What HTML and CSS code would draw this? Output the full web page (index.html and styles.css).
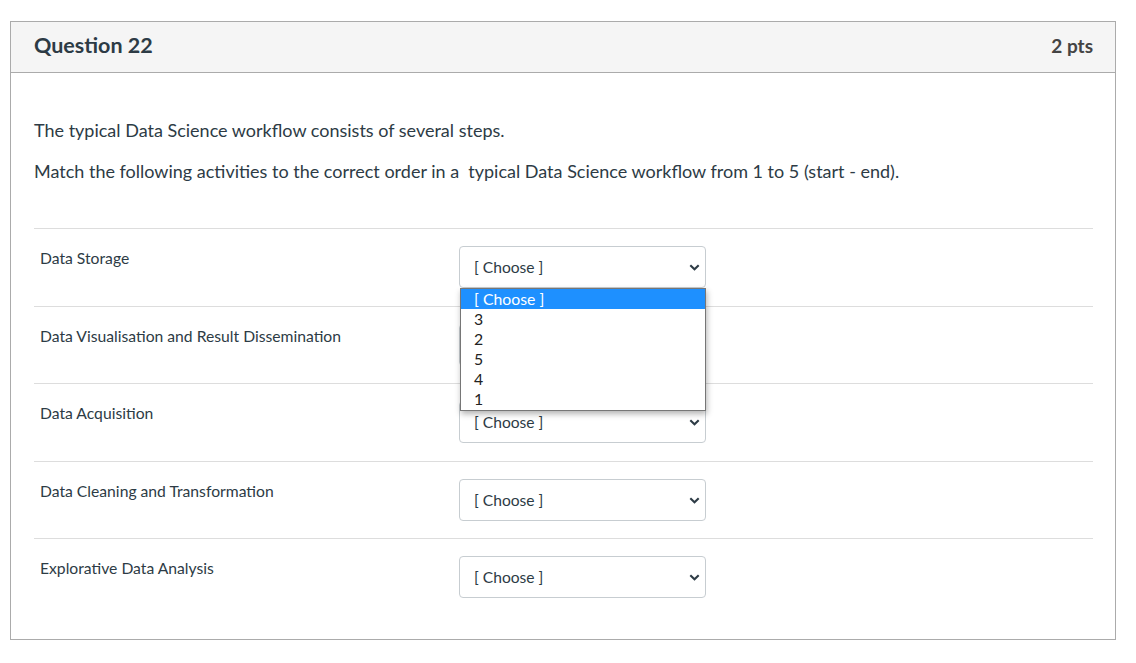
FILE: index.html
```html
<!DOCTYPE html>
<html>
<head>
<meta charset="utf-8">
<link rel="stylesheet" href="styles.css">
</head>
<body>
<div class="question">
  <div class="header">
    <span class="title">Question 22</span>
    <span class="points">2 pts</span>
  </div>
  <div class="content">
    <div class="text">
      <p>The typical Data Science workflow consists of several steps.</p>
      <p>Match the following activities to the correct order in a&nbsp; typical Data Science workflow from 1 to 5 (start - end).</p>
    </div>
    <div class="answers">
      <div class="row">
        <div class="label">Data Storage</div>
        <div class="select open">
          <span class="value">[ Choose ]</span>
          <svg class="chev" width="11" height="7" viewBox="0 0 11 7"><path d="M1.3 1.2 5.5 5.2 9.7 1.2" fill="none" stroke="#2d3b45" stroke-width="2.1"/></svg>
          <div class="list">
            <div class="opt sel">[ Choose ]</div>
            <div class="opt">3</div>
            <div class="opt">2</div>
            <div class="opt">5</div>
            <div class="opt">4</div>
            <div class="opt">1</div>
          </div>
        </div>
      </div>
      <div class="row">
        <div class="label">Data Visualisation and Result Dissemination</div>
        <div class="select">
          <span class="value">[ Choose ]</span>
          <svg class="chev" width="11" height="7" viewBox="0 0 11 7"><path d="M1.3 1.2 5.5 5.2 9.7 1.2" fill="none" stroke="#2d3b45" stroke-width="2.1"/></svg>
        </div>
      </div>
      <div class="row">
        <div class="label">Data Acquisition</div>
        <div class="select">
          <span class="value">[ Choose ]</span>
          <svg class="chev" width="11" height="7" viewBox="0 0 11 7"><path d="M1.3 1.2 5.5 5.2 9.7 1.2" fill="none" stroke="#2d3b45" stroke-width="2.1"/></svg>
        </div>
      </div>
      <div class="row">
        <div class="label">Data Cleaning and Transformation</div>
        <div class="select">
          <span class="value">[ Choose ]</span>
          <svg class="chev" width="11" height="7" viewBox="0 0 11 7"><path d="M1.3 1.2 5.5 5.2 9.7 1.2" fill="none" stroke="#2d3b45" stroke-width="2.1"/></svg>
        </div>
      </div>
      <div class="row">
        <div class="label">Explorative Data Analysis</div>
        <div class="select">
          <span class="value">[ Choose ]</span>
          <svg class="chev" width="11" height="7" viewBox="0 0 11 7"><path d="M1.3 1.2 5.5 5.2 9.7 1.2" fill="none" stroke="#2d3b45" stroke-width="2.1"/></svg>
        </div>
      </div>
    </div>
  </div>
</div>
</body>
</html>
```
FILE: styles.css
```css
html, body {
  margin: 0;
  padding: 0;
  background: #ffffff;
}
body {
  font-family: Lato, "Open Sans", "Liberation Sans", sans-serif;
  color: #2d3b45;
  padding: 21px 0 0 10px;
}
.question {
  width: 1104px;
  height: 617px;
  border: 1px solid #ababab;
  display: flex;
  flex-direction: column;
}
.header {
  height: 50px;
  background: #f5f5f5;
  border-bottom: 1px solid #ababab;
  display: flex;
  align-items: center;
  justify-content: space-between;
  padding: 0 22px 0 23px;
}
.title {
  font-size: 21.5px;
  font-weight: 700;
  color: #2d3b45;
  margin-top: -4px;
}
.points {
  font-size: 19px;
  font-weight: 700;
  color: #444;
  margin-top: -4px;
}
.content {
  padding: 45px 22px 0 23px;
}
.text p {
  margin: 0 0 17px;
  font-size: 18px;
  line-height: 24px;
}
.answers {
  margin-top: 45px;
}
.row {
  display: flex;
  align-items: flex-start;
  border-top: 1px solid #dddddd;
  padding: 17px 0 17.5px;
}
.label {
  width: 419px;
  padding: 1px 0 0 6px;
  font-size: 15.7px;
  line-height: 22px;
}
.select {
  position: relative;
  height: 40px;
  border: 1px solid #c7cdd1;
  border-radius: 4px;
  display: flex;
  align-items: center;
  justify-content: space-between;
  padding: 0 5px 0 14px;
  box-sizing: content-box;
  width: 226px;
  background: #fff;
}
.value {
  font-size: 15.6px;
  color: #2d3b45;
}
.chev {
  display: block;
  margin-top: 1px;
}
.list {
  position: absolute;
  top: 41px;
  left: 0;
  width: 244px;
  padding-bottom: 1px;
  border: 1px solid #767676;
  background: #fff;
  box-shadow: 1px 3px 6px rgba(0,0,0,0.3);
  z-index: 5;
}
.opt {
  height: 20px;
  line-height: 20px;
  padding-left: 13px;
  font-size: 15.8px;
  color: #222;
}
.opt.sel {
  background: #1e90ff;
  color: #fff;
}
```
